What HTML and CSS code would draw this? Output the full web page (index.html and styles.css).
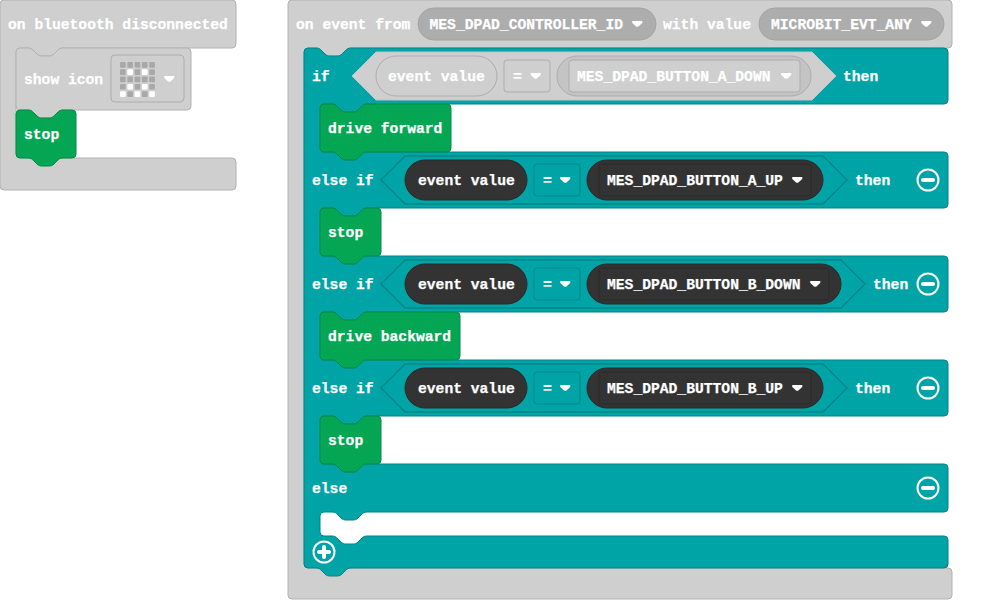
FILE: index.html
```html
<!DOCTYPE html>
<html>
<head>
<meta charset="utf-8">
<title>blocks</title>
<link rel="stylesheet" href="styles.css">
</head>
<body>
<svg class="workspace" width="1000" height="600" viewBox="0 0 1000 600">
<defs>
  <path id="arrow" d="M0 1q0-1 1-1h8.500q1 0 1 1q0 .6-.6 1.200l-3.200 3q-1.450 1.200-2.900 0l-3.200-3q-.6-.6-.6-1.200z"/>
  <g id="minus">
    <circle class="btn-ring" r="10.5"/>
    <rect class="btn-mark" x="-7" y="-2" width="14" height="4" rx="2"/>
  </g>
  <g id="plus">
    <circle class="btn-ring" r="10.5"/>
    <rect class="btn-mark" x="-7" y="-2" width="14" height="4" rx="2"/>
    <rect class="btn-mark" x="-2" y="-7" width="4" height="14" rx="2"/>
  </g>
</defs>

<!-- on bluetooth disconnected -->
<path class="grey" d="M0 4a4 4 0 0 1 4-4H232a4 4 0 0 1 4 4V44a4 4 0 0 1-4 4H63c-3 0-4 1-6 3l-3 3c-1.5 1.5-3 2-5 2h-7c-2 0-3.500-.5-5-2l-3-3c-2-2-3-3-6-3H20a4 4 0 0 0-4 4V154a4 4 0 0 0 4 4H232a4 4 0 0 1 4 4V186a4 4 0 0 1-4 4H4a4 4 0 0 1-4-4z"/>
<text class="txt" x="8" y="29">on bluetooth disconnected</text>

<path class="grey" d="M16 52a4 4 0 0 1 4-4H28c3 0 4 1 6 3l3 3c1.500 1.500 3 2 5 2h7c2 0 3.500-.5 5-2l3-3c2-2 3-3 6-3H187a4 4 0 0 1 4 4V106a4 4 0 0 1-4 4H63c-3 0-4 1-6 3l-3 3c-1.500 1.500-3 2-5 2h-7c-2 0-3.500-.5-5-2l-3-3c-2-2-3-3-6-3H20a4 4 0 0 1-4-4z"/>
<text class="txt" x="24" y="84">show icon</text>
<rect class="grey-field" x="111" y="55" width="73" height="47" rx="4"/>
<g class="led-off">
  <rect x="120" y="62" width="5.700" height="5.700" rx="1"/><rect x="127.300" y="62" width="5.700" height="5.700" rx="1"/><rect x="134.600" y="62" width="5.700" height="5.700" rx="1"/><rect x="141.900" y="62" width="5.700" height="5.700" rx="1"/><rect x="149.200" y="62" width="5.700" height="5.700" rx="1"/>
  <rect x="120" y="69.300" width="5.700" height="5.700" rx="1"/><rect x="134.600" y="69.300" width="5.700" height="5.700" rx="1"/><rect x="149.200" y="69.300" width="5.700" height="5.700" rx="1"/>
  <rect x="120" y="76.600" width="5.700" height="5.700" rx="1"/><rect x="127.300" y="76.600" width="5.700" height="5.700" rx="1"/><rect x="134.600" y="76.600" width="5.700" height="5.700" rx="1"/><rect x="141.900" y="76.600" width="5.700" height="5.700" rx="1"/><rect x="149.200" y="76.600" width="5.700" height="5.700" rx="1"/>
  <rect x="120" y="83.900" width="5.700" height="5.700" rx="1"/><rect x="134.600" y="83.900" width="5.700" height="5.700" rx="1"/><rect x="149.200" y="83.900" width="5.700" height="5.700" rx="1"/>
  <rect x="127.300" y="91.200" width="5.700" height="5.700" rx="1"/><rect x="141.900" y="91.200" width="5.700" height="5.700" rx="1"/>
</g>
<g class="led-on">
  <rect x="127.300" y="69.300" width="5.700" height="5.700" rx="1"/><rect x="141.900" y="69.300" width="5.700" height="5.700" rx="1"/>
  <rect x="127.300" y="83.900" width="5.700" height="5.700" rx="1"/><rect x="141.900" y="83.900" width="5.700" height="5.700" rx="1"/>
  <rect x="120" y="91.200" width="5.700" height="5.700" rx="1"/><rect x="134.600" y="91.200" width="5.700" height="5.700" rx="1"/><rect x="149.200" y="91.200" width="5.700" height="5.700" rx="1"/>
</g>
<use class="white" href="#arrow" x="164" y="76"/>

<path class="green" d="M16 114a4 4 0 0 1 4-4H28c3 0 4 1 6 3l3 3c1.500 1.500 3 2 5 2h7c2 0 3.500-.5 5-2l3-3c2-2 3-3 6-3H72a4 4 0 0 1 4 4V154a4 4 0 0 1-4 4H63c-3 0-4 1-6 3l-3 3c-1.500 1.500-3 2-5 2h-7c-2 0-3.500-.5-5-2l-3-3c-2-2-3-3-6-3H20a4 4 0 0 1-4-4z"/>
<text class="txt" x="24" y="139">stop</text>

<!-- on event from -->
<path class="grey" d="M288 4a4 4 0 0 1 4-4H948a4 4 0 0 1 4 4V44a4 4 0 0 1-4 4H351c-3 0-4 1-6 3l-3 3c-1.500 1.500-3 2-5 2h-7c-2 0-3.500-.5-5-2l-3-3c-2-2-3-3-6-3H308a4 4 0 0 0-4 4V564a4 4 0 0 0 4 4H948a4 4 0 0 1 4 4V595a4 4 0 0 1-4 4H292a4 4 0 0 1-4-4z"/>
<text class="txt" x="296" y="29">on event from</text>
<rect class="grey-pill" x="418" y="8" width="238" height="32" rx="16"/>
<text class="txt" x="429.500" y="29">MES_DPAD_CONTROLLER_ID</text>
<use class="white" href="#arrow" x="632" y="21"/>
<text class="txt" x="663" y="29">with value</text>
<rect class="grey-pill" x="759" y="8" width="185" height="32" rx="16"/>
<text class="txt" x="771" y="29">MICROBIT_EVT_ANY</text>
<use class="white" href="#arrow" x="921" y="21"/>

<!-- if / else if / else -->
<path class="teal" d="M304 52a4 4 0 0 1 4-4H316c3 0 4 1 6 3l3 3c1.500 1.500 3 2 5 2h7c2 0 3.500-.5 5-2l3-3c2-2 3-3 6-3H944a4 4 0 0 1 4 4V100a4 4 0 0 1-4 4H367c-3 0-4 1-6 3l-3 3c-1.500 1.500-3 2-5 2h-7c-2 0-3.500-.5-5-2l-3-3c-2-2-3-3-6-3H324a4 4 0 0 0-4 4V148a4 4 0 0 0 4 4H332c3 0 4 1 6 3l3 3c1.500 1.500 3 2 5 2h7c2 0 3.500-.5 5-2l3-3c2-2 3-3 6-3H944a4 4 0 0 1 4 4V204a4 4 0 0 1-4 4H367c-3 0-4 1-6 3l-3 3c-1.500 1.500-3 2-5 2h-7c-2 0-3.500-.5-5-2l-3-3c-2-2-3-3-6-3H324a4 4 0 0 0-4 4V252a4 4 0 0 0 4 4H332c3 0 4 1 6 3l3 3c1.500 1.500 3 2 5 2h7c2 0 3.500-.5 5-2l3-3c2-2 3-3 6-3H944a4 4 0 0 1 4 4V308a4 4 0 0 1-4 4H367c-3 0-4 1-6 3l-3 3c-1.500 1.500-3 2-5 2h-7c-2 0-3.500-.5-5-2l-3-3c-2-2-3-3-6-3H324a4 4 0 0 0-4 4V356a4 4 0 0 0 4 4H332c3 0 4 1 6 3l3 3c1.500 1.500 3 2 5 2h7c2 0 3.500-.5 5-2l3-3c2-2 3-3 6-3H944a4 4 0 0 1 4 4V412a4 4 0 0 1-4 4H367c-3 0-4 1-6 3l-3 3c-1.500 1.500-3 2-5 2h-7c-2 0-3.500-.5-5-2l-3-3c-2-2-3-3-6-3H324a4 4 0 0 0-4 4V460a4 4 0 0 0 4 4H332c3 0 4 1 6 3l3 3c1.500 1.500 3 2 5 2h7c2 0 3.500-.5 5-2l3-3c2-2 3-3 6-3H944a4 4 0 0 1 4 4V508a4 4 0 0 1-4 4H367c-3 0-4 1-6 3l-3 3c-1.500 1.500-3 2-5 2h-7c-2 0-3.500-.5-5-2l-3-3c-2-2-3-3-6-3H324a4 4 0 0 0-4 4V532a4 4 0 0 0 4 4H332c3 0 4 1 6 3l3 3c1.500 1.500 3 2 5 2h7c2 0 3.500-.5 5-2l3-3c2-2 3-3 6-3H944a4 4 0 0 1 4 4V564a4 4 0 0 1-4 4H351c-3 0-4 1-6 3l-3 3c-1.500 1.500-3 2-5 2h-7c-2 0-3.500-.5-5-2l-3-3c-2-2-3-3-6-3H308a4 4 0 0 1-4-4z"/>

<!-- if row (disabled look) -->
<text class="txt" x="312" y="81">if</text>
<path class="grey-hex" d="M352 76L376 52H812L836 76L812 100H376z"/>
<rect class="grey-field" x="376" y="56" width="121" height="40" rx="20"/>
<text class="txt" x="388" y="81">event value</text>
<rect class="grey-field" x="504" y="60" width="46" height="32" rx="3"/>
<text class="txt" x="513" y="81">=</text>
<use class="white" href="#arrow" x="530.500" y="73"/>
<rect class="grey-band" x="557" y="56" width="254" height="40" rx="20"/>
<rect class="grey-field" x="569" y="60" width="231" height="32" rx="3"/>
<text class="txt" x="577" y="81">MES_DPAD_BUTTON_A_DOWN</text>
<use class="white" href="#arrow" x="781" y="73"/>
<text class="txt" x="843" y="81">then</text>

<path class="green" d="M320 108a4 4 0 0 1 4-4H332c3 0 4 1 6 3l3 3c1.500 1.500 3 2 5 2h7c2 0 3.500-.5 5-2l3-3c2-2 3-3 6-3H447a4 4 0 0 1 4 4V148a4 4 0 0 1-4 4H367c-3 0-4 1-6 3l-3 3c-1.500 1.500-3 2-5 2h-7c-2 0-3.500-.5-5-2l-3-3c-2-2-3-3-6-3H324a4 4 0 0 1-4-4z"/>
<text class="txt" x="328" y="133">drive forward</text>

<!-- else if A up -->
<text class="txt" x="312" y="185">else if</text>
<path class="teal-hex" d="M381 180L405 156H823L847 180L823 204H405z"/>
<rect class="dark-pill" x="405" y="160" width="122" height="40" rx="20"/>
<text class="txt" x="418" y="185">event value</text>
<rect class="teal-field" x="534" y="164" width="46" height="32" rx="3"/>
<text class="txt" x="543" y="185">=</text>
<use class="white" href="#arrow" x="560" y="177"/>
<rect class="dark-pill" x="587" y="160" width="236" height="40" rx="20"/>
<rect class="dark-inner" x="599" y="164" width="212" height="32" rx="3"/>
<text class="txt" x="607" y="185">MES_DPAD_BUTTON_A_UP</text>
<use class="white" href="#arrow" x="792" y="177"/>
<text class="txt" x="855" y="185">then</text>
<use href="#minus" x="928" y="180"/>

<path class="green" d="M320 212a4 4 0 0 1 4-4H332c3 0 4 1 6 3l3 3c1.500 1.500 3 2 5 2h7c2 0 3.500-.5 5-2l3-3c2-2 3-3 6-3H377a4 4 0 0 1 4 4V252a4 4 0 0 1-4 4H367c-3 0-4 1-6 3l-3 3c-1.500 1.500-3 2-5 2h-7c-2 0-3.500-.5-5-2l-3-3c-2-2-3-3-6-3H324a4 4 0 0 1-4-4z"/>
<text class="txt" x="328" y="237">stop</text>

<!-- else if B down -->
<text class="txt" x="312" y="289">else if</text>
<path class="teal-hex" d="M381 284L405 260H841L865 284L841 308H405z"/>
<rect class="dark-pill" x="405" y="264" width="122" height="40" rx="20"/>
<text class="txt" x="418" y="289">event value</text>
<rect class="teal-field" x="534" y="268" width="46" height="32" rx="3"/>
<text class="txt" x="543" y="289">=</text>
<use class="white" href="#arrow" x="560" y="281"/>
<rect class="dark-pill" x="587" y="264" width="254" height="40" rx="20"/>
<rect class="dark-inner" x="599" y="268" width="230" height="32" rx="3"/>
<text class="txt" x="607" y="289">MES_DPAD_BUTTON_B_DOWN</text>
<use class="white" href="#arrow" x="810" y="281"/>
<text class="txt" x="873" y="289">then</text>
<use href="#minus" x="928" y="284"/>

<path class="green" d="M320 316a4 4 0 0 1 4-4H332c3 0 4 1 6 3l3 3c1.500 1.500 3 2 5 2h7c2 0 3.500-.5 5-2l3-3c2-2 3-3 6-3H456a4 4 0 0 1 4 4V356a4 4 0 0 1-4 4H367c-3 0-4 1-6 3l-3 3c-1.500 1.500-3 2-5 2h-7c-2 0-3.500-.5-5-2l-3-3c-2-2-3-3-6-3H324a4 4 0 0 1-4-4z"/>
<text class="txt" x="328" y="341">drive backward</text>

<!-- else if B up -->
<text class="txt" x="312" y="393">else if</text>
<path class="teal-hex" d="M381 388L405 364H823L847 388L823 412H405z"/>
<rect class="dark-pill" x="405" y="368" width="122" height="40" rx="20"/>
<text class="txt" x="418" y="393">event value</text>
<rect class="teal-field" x="534" y="372" width="46" height="32" rx="3"/>
<text class="txt" x="543" y="393">=</text>
<use class="white" href="#arrow" x="560" y="385"/>
<rect class="dark-pill" x="587" y="368" width="236" height="40" rx="20"/>
<rect class="dark-inner" x="599" y="372" width="212" height="32" rx="3"/>
<text class="txt" x="607" y="393">MES_DPAD_BUTTON_B_UP</text>
<use class="white" href="#arrow" x="792" y="385"/>
<text class="txt" x="855" y="393">then</text>
<use href="#minus" x="928" y="388"/>

<path class="green" d="M320 420a4 4 0 0 1 4-4H332c3 0 4 1 6 3l3 3c1.500 1.500 3 2 5 2h7c2 0 3.500-.5 5-2l3-3c2-2 3-3 6-3H377a4 4 0 0 1 4 4V460a4 4 0 0 1-4 4H367c-3 0-4 1-6 3l-3 3c-1.500 1.500-3 2-5 2h-7c-2 0-3.500-.5-5-2l-3-3c-2-2-3-3-6-3H324a4 4 0 0 1-4-4z"/>
<text class="txt" x="328" y="445">stop</text>

<!-- else -->
<text class="txt" x="312" y="493">else</text>
<use href="#minus" x="928" y="488"/>
<use href="#plus" x="324" y="552"/>
</svg>
</body>
</html>
```

FILE: styles.css
```css
body { margin:0; background:#fff; }
.workspace { display:block; }

.txt { font-family:"Liberation Mono", monospace; font-weight:bold; font-size:14.67px; fill:#fff; stroke:#fff; stroke-width:.25px; }
.white { fill:#fff; }

.grey { fill:#cfcfcf; stroke:#b2b2b2; }
.grey-hex { fill:#cfcfcf; stroke:#c4c4c4; }
.grey-field { fill:#cfcfcf; stroke:#adadad; }
.grey-pill { fill:#adadad; stroke:#a3a3a3; }
.grey-band { fill:#c4c4c4; stroke:#adadad; }
.led-off { fill:#a8a8a8; }
.led-on { fill:#fff; }

.teal { fill:#00a4a6; stroke:#008385; }
.teal-hex { fill:#00a4a6; stroke:#008688; stroke-width:1.5; }
.teal-field { fill:#00a4a6; stroke:#008688; }
.green { fill:#04a654; stroke:#038a46; }

.dark-pill { fill:#333; stroke:#2b2b2b; }
.dark-inner { fill:#333; stroke:#2b2b2b; }

.btn-ring { fill:none; stroke:#fff; stroke-width:2; }
.btn-mark { fill:#fff; }
```
